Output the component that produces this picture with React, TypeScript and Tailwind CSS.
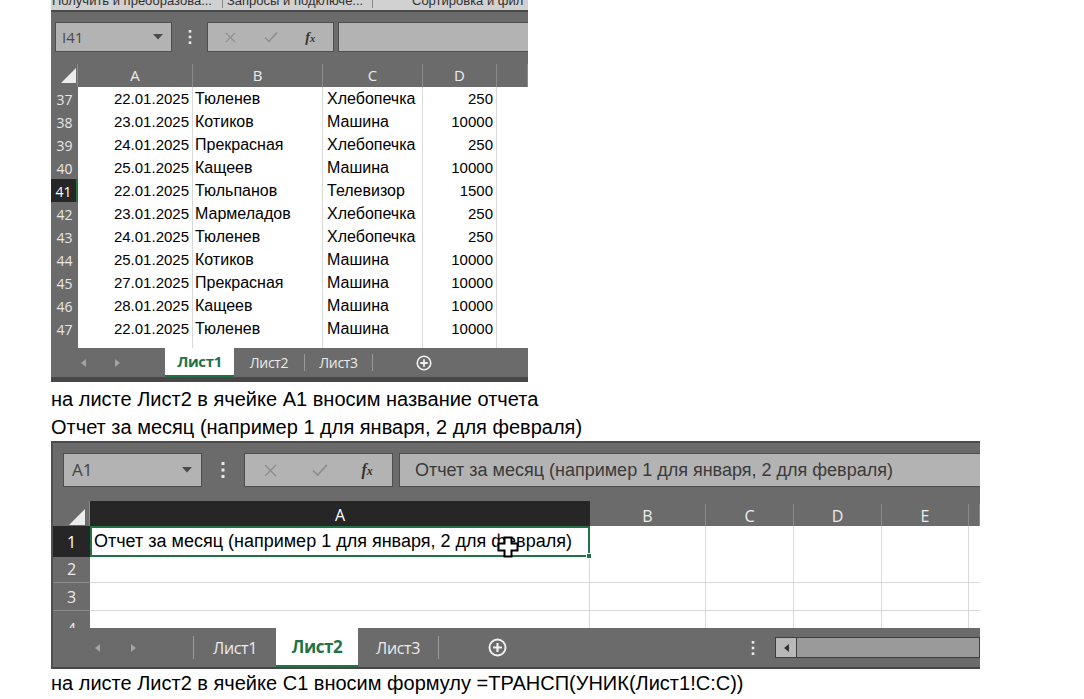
import React from "react"

const rows1 = [
  ["37", "22.01.2025", "Тюленев", "Хлебопечка", "250"],
  ["38", "23.01.2025", "Котиков", "Машина", "10000"],
  ["39", "24.01.2025", "Прекрасная", "Хлебопечка", "250"],
  ["40", "25.01.2025", "Кащеев", "Машина", "10000"],
  ["41", "22.01.2025", "Тюльпанов", "Телевизор", "1500"],
  ["42", "23.01.2025", "Мармеладов", "Хлебопечка", "250"],
  ["43", "24.01.2025", "Тюленев", "Хлебопечка", "250"],
  ["44", "25.01.2025", "Котиков", "Машина", "10000"],
  ["45", "27.01.2025", "Прекрасная", "Машина", "10000"],
  ["46", "28.01.2025", "Кащеев", "Машина", "10000"],
  ["47", "22.01.2025", "Тюленев", "Машина", "10000"],
]

const ui = "font-['Open_Sans','Liberation_Sans',sans-serif]"

function Cross({ size }: { size: number }) {
  return (
    <svg width={size} height={size} viewBox="0 0 12 12" fill="none" stroke="#8d8d8d" strokeWidth="1.3">
      <path d="M1 1 L11 11 M11 1 L1 11" />
    </svg>
  )
}

function Check({ size }: { size: number }) {
  return (
    <svg width={size} height={size} viewBox="0 0 14 12" fill="none" stroke="#8d8d8d" strokeWidth="1.4">
      <path d="M1 6.5 L5 10.5 L13 1.5" />
    </svg>
  )
}

function Dots({ h }: { h: number }) {
  return (
    <svg width="4" height={h} viewBox="0 0 4 16" fill="#e8e8e8">
      <rect x="0.5" y="0" width="3" height="3" />
      <rect x="0.5" y="6.5" width="3" height="3" />
      <rect x="0.5" y="13" width="3" height="3" />
    </svg>
  )
}

function DropDown() {
  return (
    <svg width="10" height="6" viewBox="0 0 10 6" fill="#4a4a4a">
      <path d="M0 0 H10 L5 5.5 Z" />
    </svg>
  )
}

function Corner({ size }: { size: number }) {
  return (
    <svg width={size} height={size} viewBox="0 0 10 10" fill="#ececec">
      <path d="M10 0 V10 H0 Z" />
    </svg>
  )
}

function Arrow({ dir }: { dir: "l" | "r" }) {
  return (
    <svg width="5" height="8" viewBox="0 0 5 8" fill="#a3a3a3">
      {dir === "l" ? <path d="M5 0 V8 L0 4 Z" /> : <path d="M0 0 V8 L5 4 Z" />}
    </svg>
  )
}

function PlusCircle({ size }: { size: number }) {
  return (
    <svg width={size} height={size} viewBox="0 0 18 18" fill="none" stroke="#f2f2f2" strokeWidth="1.8">
      <circle cx="9" cy="9" r="7.6" />
      <path d="M9 4.8 V13.2 M4.8 9 H13.2" strokeWidth="2" />
    </svg>
  )
}

function Fx({ cls }: { cls: string }) {
  return (
    <span className={`font-['Liberation_Serif',serif] italic font-bold text-[#333] ${cls}`}>
      f<span className="text-[0.75em]">x</span>
    </span>
  )
}

function SheetOne() {
  return (
    <div className={`w-[477px] bg-[#6b6b6b] flex flex-col ${ui}`}>
      <div className="h-[10px] bg-[#d1d1d1] overflow-hidden">
        <div className="-mt-[7px] flex font-['Liberation_Sans',Arial,sans-serif] text-[13px] leading-[15px] text-[#303030] whitespace-nowrap">
          <span className="w-[171px] shrink-0 pl-[1px]">Получить и преобразова...</span>
          <span className="w-px shrink-0 h-[15px] bg-[#8a8a8a] mr-[4px]" />
          <span className="w-[145px] shrink-0">Запросы и подключе...</span>
          <span className="w-px shrink-0 h-[15px] bg-[#8a8a8a]" />
          <span className="pl-[39px]">Сортировка и фил</span>
        </div>
      </div>
      <div className="h-[2px] bg-[#4b4b4b]" />
      <div className="h-[50px] flex items-center pl-[4px]">
        <div className="w-[117px] h-[30px] bg-[#b3b3b3] border border-[#4e4e4e] flex items-center justify-between pl-[6px] pr-[8px] text-[15px] text-[#4a4a4a]">
          <span>I41</span>
          <DropDown />
        </div>
        <div className="w-[35px] flex justify-center">
          <Dots h={14} />
        </div>
        <div className="w-[127px] h-[30px] bg-[#b3b3b3] border border-[#4e4e4e] flex items-center">
          <div className="w-[46px] flex justify-center">
            <Cross size={11} />
          </div>
          <div className="w-[34px] flex justify-center">
            <Check size={14} />
          </div>
          <div className="w-[46px] flex justify-center">
            <Fx cls="text-[14px]" />
          </div>
        </div>
        <div className="flex-1 h-[30px] ml-[4px] bg-[#b3b3b3] border border-[#4e4e4e] border-r-0" />
      </div>
      <div className="h-[25px] grid grid-cols-[27px_115px_130px_100px_74px_1fr] text-[15px] text-[#ececec]">
        <div className="flex items-end justify-end pb-[4px] pr-[1px] border-r border-[#8a8a8a] mt-[2px]">
          <Corner size={15} />
        </div>
        {["A", "B", "C", "D", ""].map((c, i) => (
          <div key={i} className="flex items-center justify-center border-r border-[#8a8a8a] mt-[2px]">
            {c}
          </div>
        ))}
      </div>
      {rows1.map((r) => {
        const sel = r[0] === "41"
        return (
          <div
            key={r[0]}
            className="h-[23px] grid grid-cols-[27px_115px_130px_100px_74px_1fr] font-['Liberation_Sans',Arial,sans-serif] text-[15px] text-black"
          >
            <div
              className={`flex items-center justify-center text-[14px] border-b ${ui} ${
                sel ? "bg-[#262626] text-white border-[#262626] border-r-2 border-r-[#217346]" : "bg-[#6b6b6b] text-[#e6e6e6] border-[#8c8c8c]"
              }`}
            >
              {r[0]}
            </div>
            <div className="bg-white border-r border-b border-[#d9d9d9] flex items-center justify-end pr-[3px]">{r[1]}</div>
            <div className="bg-white border-r border-b border-[#d9d9d9] flex items-center pl-[2px] text-[16px]">{r[2]}</div>
            <div className="bg-white border-r border-b border-[#d9d9d9] flex items-center pl-[4px] text-[16px]">{r[3]}</div>
            <div className="bg-white border-r border-b border-[#d9d9d9] flex items-center justify-end pr-[3px]">{r[4]}</div>
            <div className="bg-white border-b border-[#d9d9d9]" />
          </div>
        )
      })}
      <div className="h-[8px] grid grid-cols-[27px_115px_130px_100px_74px_1fr]">
        <div className="bg-[#6b6b6b]" />
        <div className="bg-white border-r border-[#d9d9d9]" />
        <div className="bg-white border-r border-[#d9d9d9]" />
        <div className="bg-white border-r border-[#d9d9d9]" />
        <div className="bg-white border-r border-[#d9d9d9]" />
        <div className="bg-white" />
      </div>
      <div className="h-[29px] flex items-stretch text-[14px] text-[#ececec]">
        <div className="w-[114px] flex items-center gap-[29px] pl-[30px]">
          <Arrow dir="l" />
          <Arrow dir="r" />
        </div>
        <div className="w-[69px] bg-white border-b-2 border-[#217346] flex items-center justify-center font-bold text-[15px] text-[#217346] tracking-tight">
          Лист1
        </div>
        <div className="w-[70px] flex items-center justify-center tracking-tight">Лист2</div>
        <div className="w-px my-[6px] bg-[#9a9a9a]" />
        <div className="w-[67px] flex items-center justify-center tracking-tight">Лист3</div>
        <div className="w-px my-[6px] bg-[#9a9a9a]" />
        <div className="w-[102px] flex items-center justify-center">
          <PlusCircle size={16} />
        </div>
      </div>
      <div className="h-[5px] bg-[#474747]" />
    </div>
  )
}

function SheetTwo() {
  const cols = "grid grid-cols-[37px_500px_116px_88px_88px_87px_1fr]"
  return (
    <div className={`w-[929px] bg-[#6b6b6b] border-l-2 border-[#505050] flex flex-col ${ui}`}>
      <div className="h-[2px] bg-[#4b4b4b]" />
      <div className="h-[58px] flex items-start pt-[10px] pl-[10px]">
        <div className="w-[139px] h-[34px] bg-[#b3b3b3] border border-[#4e4e4e] flex items-center justify-between pl-[8px] pr-[9px] text-[17px] text-[#444]">
          <span>A1</span>
          <DropDown />
        </div>
        <div className="w-[42px] h-[34px] flex items-center justify-center">
          <Dots h={16} />
        </div>
        <div className="w-[149px] h-[34px] bg-[#b3b3b3] border border-[#4e4e4e] flex items-center">
          <div className="w-[52px] flex justify-center">
            <Cross size={13} />
          </div>
          <div className="w-[46px] flex justify-center">
            <Check size={16} />
          </div>
          <div className="w-[50px] flex justify-center">
            <Fx cls="text-[16px]" />
          </div>
        </div>
        <div className="flex-1 h-[34px] ml-[6px] bg-[#b3b3b3] border border-[#4e4e4e] border-r-0 flex items-center pl-[15px] font-['Liberation_Sans',Arial,sans-serif] text-[18px] text-[#3a3a3a] whitespace-nowrap">
          Отчет за месяц (например 1 для января, 2 для февраля)
        </div>
      </div>
      <div className={`h-[25px] ${cols} text-[16px] text-[#ececec]`}>
        <div className="flex items-end justify-end pb-[3px] pr-[4px] border-r border-[#8a8a8a]">
          <Corner size={16} />
        </div>
        <div className="bg-[#262626] text-white flex items-center justify-center">A</div>
        {["B", "C", "D", "E", ""].map((c, i) => (
          <div key={i} className="flex items-center justify-center border-r border-[#8a8a8a] mt-[3px]">
            {c}
          </div>
        ))}
      </div>
      <div className={`h-[29px] ${cols}`}>
        <div className="bg-[#262626] text-white text-[16px] flex items-center justify-center">1</div>
        <div className="relative bg-white border-2 border-[#217346] flex items-center pl-[2px] font-['Liberation_Sans',Arial,sans-serif] text-[18px] text-black whitespace-nowrap">
          Отчет за месяц (например 1 для января, 2 для февраля)
          <div className="absolute -right-[4px] -bottom-[4px] w-[6px] h-[6px] bg-[#217346] border border-white" />
          <svg className="absolute left-[405px] top-[8px]" width="22" height="22" viewBox="0 0 22 22">
            <path
              d="M7.5 1.5 H14.5 V7.5 H20.5 V14.5 H14.5 V20.5 H7.5 V14.5 H1.5 V7.5 H7.5 Z"
              fill="white"
              stroke="black"
              strokeWidth="2"
            />
          </svg>
        </div>
        {[0, 1, 2, 3].map((i) => (
          <div key={i} className="bg-white border-r border-b border-[#d9d9d9]" />
        ))}
        <div className="bg-white border-b border-[#d9d9d9]" />
      </div>
      {["2", "3"].map((n) => (
        <div key={n} className={`h-[28px] ${cols}`}>
          <div className="text-[#ececec] text-[16px] flex items-center justify-center border-b border-[#8c8c8c]">{n}</div>
          {[0, 1, 2, 3, 4].map((i) => (
            <div key={i} className="bg-white border-r border-b border-[#d9d9d9]" />
          ))}
          <div className="bg-white border-b border-[#d9d9d9]" />
        </div>
      ))}
      <div className={`h-[17px] ${cols} overflow-hidden`}>
        <div className="text-[#ececec] text-[16px] flex justify-center pt-[6px]">4</div>
        {[0, 1, 2, 3, 4].map((i) => (
          <div key={i} className="bg-white border-r border-[#d9d9d9]" />
        ))}
        <div className="bg-white" />
      </div>
      <div className="h-[39px] flex items-stretch text-[16px] text-[#ececec]">
        <div className="w-[140px] flex items-center gap-[31px] pl-[42px]">
          <Arrow dir="l" />
          <Arrow dir="r" />
        </div>
        <div className="w-px my-[8px] bg-[#9a9a9a]" />
        <div className="w-[82px] flex items-center justify-center tracking-tight">Лист1</div>
        <div className="w-[82px] bg-white border-b-2 border-[#217346] flex items-center justify-center font-bold text-[17px] text-[#217346] tracking-tight">
          Лист2
        </div>
        <div className="w-[80px] flex items-center justify-center tracking-tight">Лист3</div>
        <div className="w-px my-[8px] bg-[#9a9a9a]" />
        <div className="w-[116px] flex items-center justify-center">
          <PlusCircle size={19} />
        </div>
        <div className="flex-1 flex items-center justify-end pr-[20px]">
          <Dots h={14} />
        </div>
        <div className="w-[205px] flex items-center">
          <div className="w-full h-[21px] border border-[#3e3e3e] bg-[#9a9a9a] flex">
            <div className="w-[21px] bg-[#b8b8b8] border-r border-[#3e3e3e] flex items-center justify-center">
              <svg width="5" height="8" viewBox="0 0 5 8" fill="#333">
                <path d="M5 0 V8 L0 4 Z" />
              </svg>
            </div>
          </div>
        </div>
      </div>
      <div className="h-[2px] bg-[#474747]" />
    </div>
  )
}

export default function App() {
  return (
    <div className="w-[1084px] h-[699px] overflow-hidden bg-white pl-[51px]">
      <SheetOne />
      <div className="mt-[3px] font-['Liberation_Sans',Arial,sans-serif] text-[20px] leading-[28px] text-black">
        <p>на листе Лист2 в ячейке А1 вносим название отчета</p>
        <p>Отчет за месяц (например 1 для января, 2 для февраля)</p>
      </div>
      <SheetTwo />
      <p className="font-['Liberation_Sans',Arial,sans-serif] text-[20px] leading-[28px] text-black">
        на листе Лист2 в ячейке С1 вносим формулу =ТРАНСП(УНИК(Лист1!С:С))
      </p>
    </div>
  )
}
